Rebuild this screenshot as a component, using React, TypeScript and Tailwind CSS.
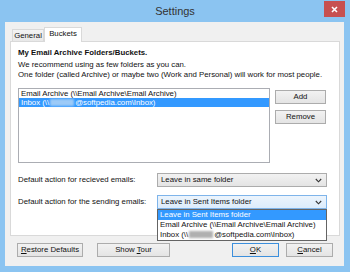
import React from "react";

const Chevron = () => (
  <svg width="7" height="5" viewBox="0 0 7 5" className="shrink-0">
    <path d="M0.8 1 L3.5 3.8 L6.2 1" fill="none" stroke="#333" strokeWidth="1.1" />
  </svg>
);

const Btn = ({ w, children, primary }: { w: string; children: React.ReactNode; primary?: boolean }) => (
  <div
    className={`flex h-[14px] items-center justify-center border bg-linear-to-b from-[#f2f2f2] to-[#e4e4e4] text-[#111] ${w} ${
      primary ? "border-[#3c8fdc]" : "border-[#acacac]"
    }`}
  >
    {children}
  </div>
);

const Blur = ({ light }: { light?: boolean }) => (
  <span
    className={`mx-[1px] inline-block h-[7px] w-[24px] align-middle blur-[1px] ${
      light ? "bg-[#9ccaf7]" : "bg-[#b0b0b0]"
    }`}
  />
);

export default function App() {
  return (
    <div
      className="flex h-[272px] w-[350px] flex-col overflow-hidden bg-[#8bc4f1] text-[7.8px] leading-[10px] text-[#111]"
      style={{ fontFamily: '"Liberation Sans", Arial, sans-serif' }}
    >
      {/* Title bar */}
      <div className="relative flex h-[22px] shrink-0 items-center justify-center">
        <span className="text-[11px] text-[#333]">Settings</span>
        <div className="absolute right-[5px] top-[1px] flex h-[16px] w-[21px] items-center justify-center bg-[#c75050]">
          <svg width="7" height="7" viewBox="0 0 7 7">
            <path d="M1 1 L6 6 M6 1 L1 6" stroke="#fff" strokeWidth="1.6" />
          </svg>
        </div>
      </div>

      {/* Client area */}
      <div className="ml-[5px] flex h-[244px] w-[339px] flex-col bg-[#f0f0f0] px-[5px] pt-[5px]">
        {/* Tabs */}
        <div className="relative z-10 -mb-px flex h-[15px] items-end pl-[2px]">
          <div className="mb-px flex h-[12px] w-[32px] items-center justify-center border border-b-0 border-[#d9d9d9] bg-linear-to-b from-[#f3f3f3] to-[#e8e8e8]">
            General
          </div>
          <div className="flex h-[15px] w-[38px] items-start justify-center border border-b-0 border-[#d9d9d9] bg-white pt-[1px]">
            Buckets
          </div>
        </div>

        {/* Panel */}
        <div className="relative h-[195px] w-[330px] border border-[#d9d9d9] bg-white pl-[7px] pt-[6px]">
          <div className="font-bold">My Email Archive Folders/Buckets.</div>
          <div className="mt-[2px]">We recommend using as few folders as you can.</div>
          <div>One folder (called Archive) or maybe two (Work and Personal) will work for most people.</div>

          <div className="mt-[8px] flex">
            <div className="h-[75px] w-[252px] border border-[#abadb3] bg-white">
              <div className="h-[9px] pl-[2px] leading-[9px]">{"Email Archive (\\\\Email Archive\\Email Archive)"}</div>
              <div className="h-[9px] bg-[#3399ff] pl-[2px] leading-[9px] text-white">
                {"Inbox (\\\\"}
                <Blur light />
                {"@softpedia.com\\Inbox)"}
              </div>
            </div>
            <div className="ml-[5px] flex flex-col">
              <div className="mt-[2px]">
                <Btn w="w-[51px]">Add</Btn>
              </div>
              <div className="mt-[6px]">
                <Btn w="w-[51px]">Remove</Btn>
              </div>
            </div>
          </div>

          <div className="mt-[10px] flex items-center">
            <div className="w-[139px]">Default action for recieved emails:</div>
            <div className="flex h-[14px] w-[170px] items-center justify-between border border-[#acacac] bg-linear-to-b from-[#f2f2f2] to-[#e4e4e4] pl-[3px] pr-[4px]">
              <span>Leave in same folder</span>
              <Chevron />
            </div>
          </div>

          <div className="relative mt-[8px] flex items-center">
            <div className="w-[139px]">Default action for the sending emails:</div>
            <div className="flex h-[14px] w-[170px] items-center justify-between border border-[#7eb4ea] bg-linear-to-b from-[#ecf4fc] to-[#dcecfc] pl-[3px] pr-[4px]">
              <span>Leave in Sent Items folder</span>
              <Chevron />
            </div>

            {/* Open drop list */}
            <div className="absolute left-[139px] top-[14px] z-20 w-[170px] border border-[#646464] bg-white">
              <div className="h-[10px] bg-[#3399ff] pl-[2px] text-white">Leave in Sent Items folder</div>
              <div className="h-[10px] pl-[2px]">{"Email Archive (\\\\Email Archive\\Email Archive)"}</div>
              <div className="h-[10px] pl-[2px]">
                {"Inbox (\\\\"}
                <Blur />
                {"@softpedia.com\\Inbox)"}
              </div>
            </div>
          </div>
        </div>

        {/* Bottom buttons */}
        <div className="mt-[7px] flex pl-[7px]">
          <Btn w="w-[66px]">
            <span>
              <span className="underline">R</span>estore Defaults
            </span>
          </Btn>
          <div className="ml-[14px]">
            <Btn w="w-[73px]">
              <span>
                Show <span className="underline">T</span>our
              </span>
            </Btn>
          </div>
          <div className="ml-[62px]">
            <Btn w="w-[47px]" primary>
              <span>
                <span className="underline">O</span>K
              </span>
            </Btn>
          </div>
          <div className="ml-[7px]">
            <Btn w="w-[47px]">
              <span>
                <span className="underline">C</span>ancel
              </span>
            </Btn>
          </div>
        </div>
      </div>
    </div>
  );
}
